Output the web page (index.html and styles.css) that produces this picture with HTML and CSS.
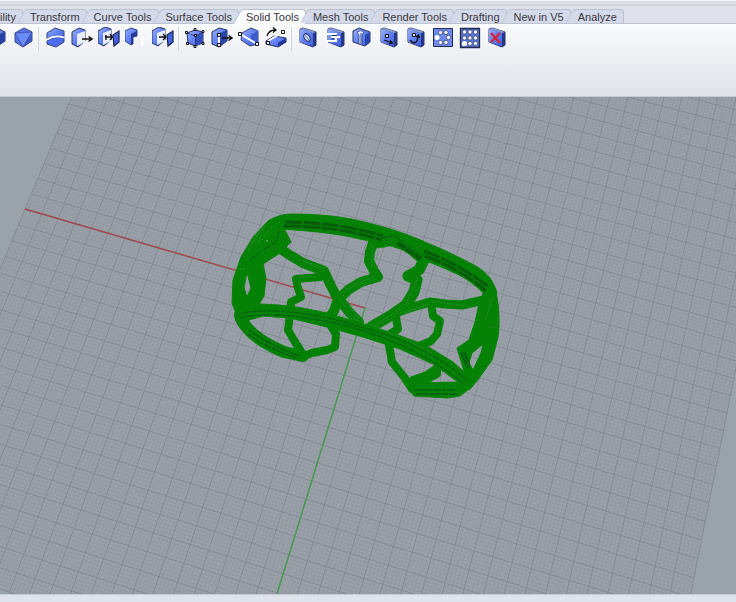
FILE: index.html
```html
<!DOCTYPE html>
<html lang="en">
<head>
<meta charset="utf-8">
<title>Solid Tools</title>
<link rel="stylesheet" href="styles.css">
</head>
<body>
<svg class="defs" aria-hidden="true">
  <defs>
    <linearGradient id="blue" x1="0" y1="0" x2="1" y2="1">
      <stop offset="0" stop-color="#9db4ff"/><stop offset=".45" stop-color="#6685f5"/><stop offset="1" stop-color="#3c5ce0"/>
    </linearGradient>
    <symbol id="cube" viewBox="0 0 22 22">
      <path d="M3 6L12 1L20 5V14L11 20L3 15Z" fill="url(#blue)" stroke="#27345f"/>
      <path d="M11.500 8.500L20 5V14L11 20Z" fill="#2741a8"/>
      <path d="M3 6L11.500 8.500L20 5M11.500 8.500L11 20" fill="none" stroke="#40549f" stroke-width=".8"/>
    </symbol>
    <symbol id="slab" viewBox="0 0 22 22">
      <path d="M3 2L6 1L19 5V18L16 20L3 15Z" fill="#26388a" stroke="#27345f"/>
      <path d="M3 2L16 6V19.500L3 15Z" fill="url(#blue)"/>
      <path d="M3 2L6 1L19 5L16 6Z" fill="#8e9fd8"/>
    </symbol>
    <symbol id="halfbox" viewBox="0 0 22 22">
      <path d="M1 5L8 1L14 3V14L7 20L1 17Z" fill="url(#blue)" stroke="#27345f"/>
      <path d="M6 7L14 4V15L6 19Z" fill="#e9edfa"/>
    </symbol>
    <symbol id="arrow" viewBox="0 0 22 22">
      <path d="M10 12H19M16.500 9.500L20 12L16.500 14.500" fill="none" stroke="#111" stroke-width="1.400"/>
    </symbol>
    <symbol id="panel" viewBox="0 0 22 22">
      <path d="M15 8L21 4V15L16 19Z" fill="#4464df" stroke="#17224f" stroke-width="1.200"/>
    </symbol>
  </defs>
</svg>

<header class="ribbon">
  <nav class="tabs" role="tablist" aria-label="Toolbars">
    <button class="tab first" role="tab">ility</button>
    <button class="tab" role="tab">Transform</button>
    <button class="tab" role="tab">Curve Tools</button>
    <button class="tab" role="tab">Surface Tools</button>
    <button class="tab active" role="tab" aria-selected="true">Solid Tools</button>
    <button class="tab" role="tab">Mesh Tools</button>
    <button class="tab" role="tab">Render Tools</button>
    <button class="tab" role="tab">Drafting</button>
    <button class="tab" role="tab">New in V5</button>
    <button class="tab" role="tab">Analyze</button>
  </nav>
  <div class="tools" role="toolbar" aria-label="Solid Tools">
    <button class="tool" aria-label="Union"><svg viewBox="0 0 22 22"><use href="#cube"/></svg></button>
    <button class="tool" aria-label="Solid"><svg viewBox="0 0 22 22"><path d="M3 6L12 1L20 5V14L11 20L3 15Z" fill="#5876e8" stroke="#3b4c83"/><path d="M3 6L20 5L11 20Z" fill="#6c8bfa"/><path d="M20 5V14L11 20Z" fill="#3b56bd"/><path d="M3 6L20 5L11 20L3 6" fill="none" stroke="#3a4fa0" stroke-width=".8"/></svg></button>
    <span class="sep"></span>
    <button class="tool" aria-label="Cap"><svg viewBox="0 0 22 22"><path d="M3 6L11 1L20 4V10Q11 7 3 12Z" fill="url(#blue)" stroke="#34457b"/><path d="M3 14Q11 8 20 11V15L12 20L3 17Z" fill="#4b6cec" stroke="#34457b"/><path d="M3 12.500Q11 7.500 20 10.500" fill="none" stroke="#fff" stroke-width="1.800"/></svg></button>
    <button class="tool" aria-label="Extract"><svg viewBox="0 0 22 22"><use href="#halfbox"/><use href="#arrow" x="1"/></svg></button>
    <button class="tool" aria-label="Merge"><svg viewBox="0 0 22 22"><use href="#halfbox" x="-1" y="-1"/><path d="M7 10H14M12 7L14.500 10L12 13M8 8V13" stroke="#111" stroke-width="1.400" fill="none"/><use href="#panel"/></svg></button>
    <button class="tool" aria-label="Unjoin"><svg viewBox="0 0 22 22"><path d="M0 4L6 1L12 3V9L8 10V17L6 18L0 14Z" fill="url(#blue)" stroke="#34457b"/><path d="M6 7L12 4V9L8 10V17H6Z" fill="#233b9b"/><path d="M14 11L20 8V17L15 20Z" fill="#fdfdfe" stroke="#eceef5"/></svg></button>
    <button class="tool" aria-label="Move face"><svg viewBox="0 0 22 22"><use href="#halfbox" x="-1" y="-1"/><path d="M7 10H13.500M11 7L14 10L11 13" stroke="#111" stroke-width="1.400" fill="none"/><use href="#panel"/></svg></button>
    <span class="sep"></span>
    <button class="tool" aria-label="Points on"><svg viewBox="0 0 22 22"><path d="M3 6L11 3L19 5V16L11 19L4 16Z" fill="url(#blue)" stroke="#27345f"/><path d="M11.500 9L19 5V16L11 19Z" fill="#3350bd"/><path d="M3 6L11.500 9L19 5M11.500 9V19" fill="none" stroke="#27345f" stroke-width=".8"/><g fill="#dde3f5" stroke="#111"><path d="M1.500 4.500h2v2h-2zM10 1.500h2v2h-2zM18 3.500h2v2h-2zM18 15.500h2v2h-2zM10 18.500h2v2h-2zM2.500 15.500h2v2h-2zM10.500 7.500h2v2h-2z"/></g></svg></button>
    <button class="tool" aria-label="Move edge"><svg viewBox="0 0 22 22"><path d="M1 5L8 1L16 3V14L8 20L1 17Z" fill="url(#blue)" stroke="#27345f"/><path d="M9 6L16 3V14L9 19Z" fill="#2945a9"/><use href="#arrow" x="1" y="-1"/><path d="M8 8V17" stroke="#fff" stroke-width="2"/><path d="M6.500 6.500h3v3h-3zM6.500 16.500h3v3h-3z" fill="#fff" stroke="#111"/></svg></button>
    <button class="tool" aria-label="Split face"><svg viewBox="0 0 22 22"><path d="M4 6L13 1L20 4V17L12 19L3 13Z" fill="url(#blue)" stroke="#34457b"/><path d="M13 8L20 4V16L13 12Z" fill="#3f5ccc"/><path d="M3 7.500L18 16.500" stroke="#fff" stroke-width="2"/><path d="M.500 5.500h3v3h-3zM17.500 15.500h3v3h-3z" fill="#fff" stroke="#111"/></svg></button>
    <button class="tool" aria-label="Rotate face"><svg viewBox="0 0 22 22"><path d="M1 14L9 9L21 11V15L13 20L1 17Z" fill="url(#blue)" stroke="#27345f"/><path d="M13 16L21 11V15L13 20Z" fill="#203a9b"/><path d="M3 14L18 5" stroke="#fff" stroke-width="1.600"/><path d="M2 9Q4 3 10 3M8 .500L11 3L8 5.500" fill="none" stroke="#111" stroke-width="1.300"/><path d="M1.500 14.500h3v3h-3zM16.500 3.500h3v3h-3z" fill="#fff" stroke="#111"/></svg></button>
    <span class="sep"></span>
    <button class="tool" aria-label="Round hole"><svg viewBox="0 0 22 22"><use href="#slab"/><ellipse cx="10" cy="10.500" rx="2.600" ry="4.200" transform="rotate(-35 10 10.500)" fill="#dfe5fb" stroke="#1c2a63"/><path d="M8 8L12 13" stroke="#4966cf"/></svg></button>
    <button class="tool" aria-label="Make hole"><svg viewBox="0 0 22 22"><use href="#slab" x="1"/><path d="M2 7H12V10H7M3 14H12V10H16" fill="none" stroke="#fff" stroke-width="2"/><path d="M8 8.500h5M7 12h3" stroke="#1d2b67"/></svg></button>
    <button class="tool" aria-label="Revolved hole"><svg viewBox="0 0 22 22"><path d="M2 4L8 1L19 5V15L14 19L2 15Z" fill="url(#blue)" stroke="#27345f"/><path d="M14 8L19 5V15L14 19Z" fill="#2945a9"/><path d="M6 5Q10 2 13 5L11 8V18L8 17V8Z" fill="#e6ebff" stroke="#33457f" stroke-width=".8"/><path d="M10 6V17" stroke="#3048a0"/></svg></button>
    <button class="tool" aria-label="Move hole"><svg viewBox="0 0 22 22"><use href="#slab"/><path d="M7.500 7.500h3v3h-3z" fill="#cfd9ff" stroke="#111"/><path d="M6 13L14 16M12 13.500L14.500 16L11 17" fill="none" stroke="#111" stroke-width="1.300"/></svg></button>
    <button class="tool" aria-label="Rotate hole"><svg viewBox="0 0 22 22"><use href="#slab"/><path d="M7.500 6.500h3v3h-3z" fill="#cfd9ff" stroke="#111"/><path d="M5 13Q9 18 12 14L13 9M11 10L13.500 8L14.500 11" fill="none" stroke="#111" stroke-width="1.300"/></svg></button>
    <button class="tool" aria-label="Polar array hole"><svg viewBox="0 0 22 22"><path d="M1.500 1.500h19v18h-19z" fill="#6d88ee" stroke="#202a4c"/><g fill="#fff" stroke="#3f4a70" stroke-width=".8"><circle cx="5" cy="10.500" r="2.500" stroke="none"/><circle cx="8.500" cy="5.500" r="2.100"/><circle cx="14" cy="5.500" r="2.100"/><circle cx="16.500" cy="10.500" r="2.100"/><circle cx="8.500" cy="15.500" r="2.100"/><circle cx="14" cy="15.500" r="2.100"/></g></svg></button>
    <button class="tool" aria-label="Array hole"><svg viewBox="0 0 22 22"><path d="M1.500 1.500h19v19h-19z" fill="#5874d8" stroke="#202a4c" stroke-width="1.300"/><g fill="#fff" stroke="#3f4a70" stroke-width=".8"><circle cx="5.500" cy="5" r="2.100"/><circle cx="11" cy="5" r="2.100"/><circle cx="16.500" cy="5" r="2.100"/><circle cx="5.500" cy="11" r="2.100"/><circle cx="11" cy="11" r="2.100"/><circle cx="16.500" cy="11" r="2.100"/><circle cx="5.500" cy="16.500" r="2.600" stroke="none"/><circle cx="11" cy="16.500" r="2.100"/><circle cx="16.500" cy="16.500" r="2.100"/></g></svg></button>
    <button class="tool" aria-label="Delete hole"><svg viewBox="0 0 22 22"><use href="#slab"/><path d="M5 6L14 16M14 6L5 15" stroke="#e0202c" stroke-width="2.200"/></svg></button>
  </div>
</header>

<main class="viewport">
  <svg viewBox="0 97 736 497" preserveAspectRatio="xMidYMid slice" role="img" aria-label="Perspective viewport">
    <path id="plane" fill="#99a0a8"/>
    <path id="minor" fill="none" stroke="#828a95" stroke-width=".6" opacity=".36"/>
    <path id="major" fill="none" stroke="#7c808b" stroke-width="1" opacity=".7"/>
    <path d="M25 209L365 308" stroke="#a0484a" stroke-width="1.500"/>
    <path d="M365 308L277 594" stroke="#479a50" stroke-width="1.500"/>

    <g fill="none" stroke="#058205" stroke-linejoin="round" stroke-linecap="round">
      <path stroke-width="10" d="M278 247L288 254L303 263L324 271L331 286L338 299L334 311L329 318"/>
      <path stroke-width="8" d="M320 277L296 279L298 288L301 297L291 302L290 315L288 330L295 342L304 356L312 353L327 350L335 347L336 334L329 323"/>
      <path stroke-width="10" d="M373 243L370 252L369 261L374 271L378 277L361 282L348 290L339 299L349 312L359 322"/>
      <path stroke-width="11" d="M374 243L384 242L396 239L412 250L424 260L419 270L408 276L417 280L414 292L406 305L390 316L371 327"/>
      <path stroke-width="9" d="M398 312L413 307L430 302L445 304L462 305L484 300"/>
      <path stroke-width="8" d="M431 303L433 316L440 321L437 334L431 341L419 346M396 318L398 329L390 334"/>
      <path stroke-width="8" d="M389 345L392 362L404 377L412 389"/>
      <path stroke-width="8" d="M413 380L427 375L437 368L437 374L422 382"/>
      <path stroke-width="12" d="M241 319C250 336 268 345 284 352L303 356"/>
    </g>
    <g fill="#058205" stroke="#058205" stroke-linejoin="round" fill-rule="evenodd">
      <path d="M268 221Q279 214 292 214C315 214 340 216 360 221C390 228 410 235 427 243C445 250 460 258 470 263C485 270 493 279 497 293L485 295C475 284 465 278 455 273C440 266 425 261 410 253C395 246 380 243 360 239C335 233 310 231 282 229Z"/>
      <path d="M269 220L283 226L291 242L280 253L263 264L266 278L264 296L257 308L237 316L232 303L233 280L241 257L253 237ZM247 272L251 288L247 297L244 288ZM264 243L269 241L267 239Z"/>
      <path d="M235 312Q243 304 257 304C280 304 305 308 327 313L360 323L393 333L427 346L453 362L472 379L470 389Q465 391 458 382L433 364L400 349L363 337L327 327L290 318L263 316L239 323Q233 319 235 312Z"/>
      <path d="M484 291H496Q501 317 498 337L492 360L477 381L469 390L464 371L457 348L469 340L475 322L479 304ZM472 353L483 344L481 353L473 370L469 363Z"/>
      <path d="M406 383L460 382L469 376L473 386L460 396L448 398L414 396Z"/>
    </g>
    <g fill="none" stroke="#075b0a" stroke-width="3" stroke-dasharray="17 1.500">
      <path d="M285 222C325 222 358 228 383 236M284 226C325 226 358 232 381 240"/>
      <path d="M424 251C447 260 465 269 489 287M425 256C446 264 465 273 486 291"/>
      <path stroke-width="4.500" stroke-dasharray="9 1" d="M398 243L421 259"/>
    </g>
    <g fill="none" stroke="#065c12" stroke-width="1.500" stroke-dasharray="4 1 8 1">
      <path d="M239 314C270 306 325 315 361 327C400 337 442 356 468 382M240 318C270 310 325 319 361 330C400 342 436 361 464 384" opacity=".75"/>
      <path d="M249 330C262 340 280 349 299 356M248 334C262 345 280 352 296 358M414 390H455M416 394H457"/>
      <path d="M461 353L468 368M464 352L470 366" stroke-width="2"/>
      <path d="M280 230L276 242L260 252L249 262M375 239L395 236L425 257" stroke-width="1"/>
    </g>
    <g fill="none" stroke="#3d9645" stroke-width="1" stroke-dasharray="2 1" opacity=".6">
      <path d="M299 277H316M299 281L302 294M303 261L322 270M343 295L358 319M339 299L346 307M349 287L375 276M373 246L372 266M376 324L391 315L407 302L418 277M400 313L427 305M432 301L472 307M435 320L437 333M263 229L258 244M265 226L249 246M240 269H246M489 327H498M492 298L485 321M333 313L372 325L405 339L433 354"/>
      <path d="M260 230L248 252M272 226L262 240M379 247L374 268M345 290L362 284L377 279M346 298L361 320M374 327L392 318L409 303M299 259L324 268M405 313L429 304"/>
    </g>
  </svg>
</main>
<footer class="status"></footer>
<script src="grid.js"></script>
</body>
</html>
```
FILE: styles.css
```css
* {
  box-sizing: border-box;
}

body {
  margin: 0;
  height: 100vh;
  display: flex;
  flex-direction: column;
  overflow: hidden;
  background: #dfe2ea;
  font-family: "Liberation Sans", Arial, sans-serif;
  font-size: 11px;
  color: #38383c;
}

button {
  margin: 0;
  padding: 0;
  border: 0;
  background: none;
  font: inherit;
  color: inherit;
}

.defs {
  position: absolute;
  width: 0;
  height: 0;
}

.ribbon {
  border-bottom: 1px solid #c3cad3;
}

.tabs {
  display: flex;
  padding-top: 4px;
  border-top: 1px solid #f4f5f7;
  border-bottom: 1px solid #bdc4d0;
  background: linear-gradient(#dcdfe5 3px, #d3d7df 3px 5px, #dee1ea 5px);
}

.tab {
  position: relative;
  z-index: 0;
  height: 14px;
  margin-top: 4px;
  padding: 0 7px;
  line-height: 16px;
  white-space: nowrap;
}

.tab.first {
  padding-left: 0;
}

.tab::before,
.tab::after {
  content: "";
  position: absolute;
  z-index: -1;
  top: 0;
  bottom: 0;
  border: 1px solid #b9c0ce;
  border-bottom: 0;
  background: #d5daea;
}

.tab::before {
  left: -2px;
  width: 20px;
  border-right: 0;
  border-radius: 4px 0 0 0;
  transform: skewX(-28deg);
}

.tab::after {
  left: 10px;
  right: 0;
  border-left: 0;
  border-radius: 0 4px 0 0;
}

.tab.first::before {
  display: none;
}

.tab.first::after {
  left: 0;
}

.tab.active::before,
.tab.active::after {
  bottom: -1px;
  background: #fafbfd;
}

.tools {
  display: flex;
  height: 72px;
  padding-top: 3px;
  background: linear-gradient(#fafbfc, #eeeff3 45%, #dfe2ea);
}

.tool {
  flex: none;
  width: 27px;
  height: 22px;
}

.tool:first-child {
  margin-left: -18px;
}

.tool svg {
  display: block;
  width: 22px;
  height: 22px;
  margin: 0 auto;
}

.sep {
  width: 5px;
  height: 24px;
  background: linear-gradient(90deg, transparent 40%, #d4d6dc 40% 60%, transparent 60%);
}

.viewport {
  flex: 1;
  min-height: 0;
  background: #9ba3aa;
}

.viewport svg {
  display: block;
  width: 100%;
  height: 100%;
}

.status {
  height: 8px;
  border-top: 1px solid #c3cad3;
  background: #dfe3eb;
}
```
FILE: grid.js
```javascript
// Projects a point of the construction plane onto the viewport.
function project(u, v) {
  const w = 1 - 0.001565 * u - 0.00467 * v;
  return [
    (16.96 * u - 6.79 * v + 365) / w,
    (4.604 * u + 15.04 * v + 308) / w
  ].map(n => n.toFixed(2)).join(" ");
}

const extent = 20;
const divisions = 5;
const lines = { major: "", minor: "" };

for (let i = -extent * divisions; i <= extent * divisions; i++) {
  const t = i / divisions;
  const kind = i % divisions === 0 ? "major" : "minor";
  lines[kind] += `M${project(t, -extent)}L${project(t, extent)}`;
  lines[kind] += `M${project(-extent, t)}L${project(extent, t)}`;
}

document.getElementById("major").setAttribute("d", lines.major);
document.getElementById("minor").setAttribute("d", lines.minor);
document.getElementById("plane").setAttribute("d",
  `M${project(-extent, -extent)}L${project(extent, -extent)}L${project(extent, extent)}L${project(-extent, extent)}Z`);
```
